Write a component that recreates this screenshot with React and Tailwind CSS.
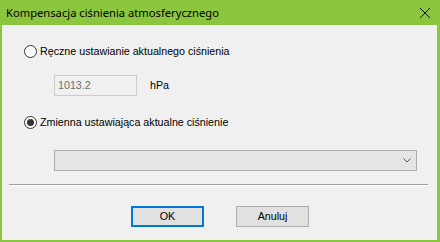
export default function App() {
  const body = { fontFamily: '"Liberation Sans", Arial, sans-serif' };
  return (
    <div className="w-[440px] h-[242px] flex flex-col bg-[#8cc63f] overflow-hidden">
      <div className="h-[25px] flex items-center justify-between pl-[6px] pr-[8px]">
        <span className="text-[11.2px] text-black leading-none" style={{ fontFamily: '"Noto Sans", sans-serif' }}>
          Kompensacja ciśnienia atmosferycznego
        </span>
        <svg width="12" height="12" viewBox="0 0 12 12" className="mr-[1px]">
          <path d="M1 1 L11 11 M11 1 L1 11" stroke="#111" strokeWidth="1" fill="none" />
        </svg>
      </div>
      <div className="flex-1 bg-[#f0f0f0] ml-[2px] mr-[3px] mb-[2px] flex flex-col text-[10.7px] text-black" style={body}>
        <label className="mt-[20px] ml-[22px] flex items-center gap-[3px] h-[13px]">
          <span className="w-[13px] h-[13px] rounded-full border border-[#333] bg-white" />
          <span>Ręczne ustawianie aktualnego ciśnienia</span>
        </label>
        <div className="mt-[17px] ml-[52px] flex items-center">
          <div className="w-[83px] h-[21px] border border-[#cccccc] bg-[#f0f0f0] flex items-center pl-[3px] text-[#6d6d6d]">
            1013.2
          </div>
          <span className="ml-[13px]">hPa</span>
        </div>
        <label className="mt-[20px] ml-[22px] flex items-center gap-[3px] h-[13px]">
          <span className="w-[13px] h-[13px] rounded-full border border-[#333] bg-white flex items-center justify-center">
            <span className="w-[7px] h-[7px] rounded-full bg-[#333]" />
          </span>
          <span>Zmienna ustawiająca aktualne ciśnienie</span>
        </label>
        <div className="mt-[21px] ml-[52px] w-[363px] h-[21px] border border-[#adadad] bg-[#e5e5e5] flex items-center justify-end pr-[5px]">
          <svg width="8" height="5" viewBox="0 0 8 5">
            <path d="M0.5 0.5 L4 4 L7.5 0.5" stroke="#555" strokeWidth="1" fill="none" />
          </svg>
        </div>
        <div className="mt-[13px] ml-[7px] w-[419px] h-[2px] border-t border-[#a0a0a0] border-b border-b-white" />
        <div className="mt-[20px] flex items-center">
          <button className="ml-[129px] w-[73px] h-[21px] border-2 border-[#0078d7] bg-[#e1e1e1] flex items-center justify-center">
            OK
          </button>
          <button className="ml-[32px] w-[73px] h-[21px] border border-[#adadad] bg-[#e1e1e1] flex items-center justify-center">
            Anuluj
          </button>
        </div>
      </div>
    </div>
  );
}
